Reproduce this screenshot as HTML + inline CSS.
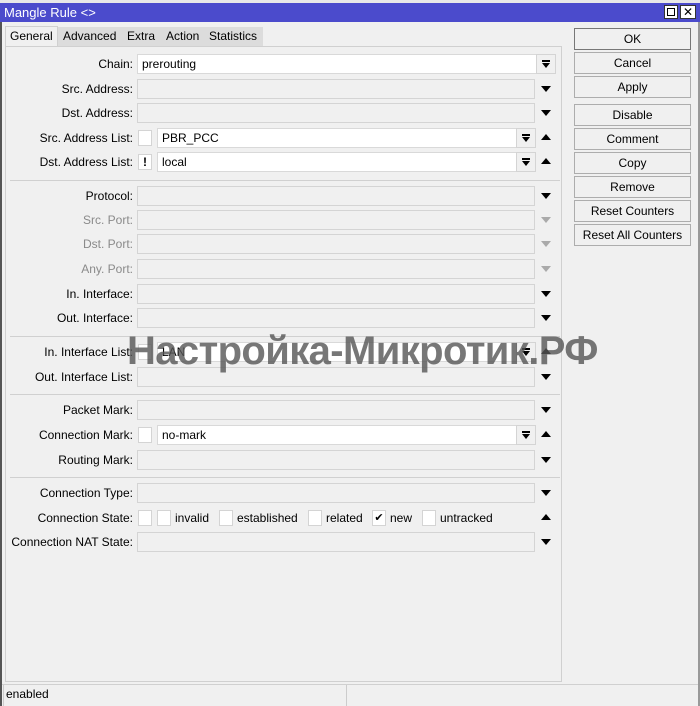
<!DOCTYPE html><html><head><style>
*{margin:0;padding:0;box-sizing:border-box}
body{width:700px;height:706px;background:#f0f0f0;font-family:"Liberation Sans",Arial,sans-serif;font-size:12px;color:#000;position:relative;overflow:hidden}
.a{position:absolute}
.lbl{position:absolute;right:567px;text-align:right;white-space:nowrap;line-height:20px}
.f{position:absolute;height:20px;border:1px solid #d4d4d4;background:#f0f0f0}
.w{background:#fff;border-color:#d9d9d9;padding-left:4px;line-height:18px}
.cb{position:absolute;width:14px;height:16px;border:1px solid #d4d4d4;background:#fff}
.dn{position:absolute;width:0;height:0;border-left:5px solid transparent;border-right:5px solid transparent;border-top:6px solid #000}
.up{position:absolute;width:0;height:0;border-left:5px solid transparent;border-right:5px solid transparent;border-bottom:6px solid #000}
.g{border-top-color:#aaa}
.dis{color:#8a8a8a}
.btn{position:absolute;left:574px;width:117px;height:22px;border:1px solid #adadad;background:#f0f0f0;text-align:center;line-height:20px}
.sep{position:absolute;left:10px;width:550px;height:1px;background:#d0d0d0}
.sb{position:absolute;width:20px;height:20px;border:1px solid #d4d4d4;background:#f0f0f0}
.sb:before{content:"";position:absolute;left:5px;top:5px;width:8px;height:2px;background:#000}
.sb:after{content:"";position:absolute;left:5px;top:8px;border-left:4px solid transparent;border-right:4px solid transparent;border-top:5px solid #000}
</style></head><body>
<div class="a" style="left:0;top:0;width:700px;height:4px;background:#e8e8e8"></div>
<div class="a" style="left:0;top:3px;width:700px;height:19px;background:#4b4bcc;color:#fff;font-size:13px;line-height:19px;padding-left:4px">Mangle Rule &lt;&gt;</div>
<div class="a" style="left:664px;top:5px;width:14px;height:14px;background:#fff;border:1px solid #333"><div class="a" style="left:2px;top:2px;width:8px;height:8px;border:1px solid #000"></div></div>
<div class="a" style="left:680px;top:5px;width:16px;height:14px;background:#fff;border:1px solid #333;text-align:center;line-height:12px;font-size:12px;color:#000">✕</div>
<div class="a" style="left:0;top:22px;width:2px;height:684px;background:#555"></div>
<div class="a" style="left:698px;top:22px;width:2px;height:684px;background:#999"></div>
<div class="a" style="left:5px;top:26px;width:53px;height:21px;background:#f0f0f0;border:1px solid #d0d0d0;border-bottom:none;line-height:19px;padding-left:4px">General</div>
<div class="a" style="left:58px;top:27px;width:205px;height:19px;background:#dcdcdc"></div>
<div class="a" style="left:63px;top:27px;line-height:19px">Advanced</div>
<div class="a" style="left:127px;top:27px;line-height:19px">Extra</div>
<div class="a" style="left:166px;top:27px;line-height:19px">Action</div>
<div class="a" style="left:209px;top:27px;line-height:19px">Statistics</div>
<div class="a" style="left:5px;top:46px;width:557px;height:636px;border:1px solid #d0d0d0"></div>
<div class="btn" style="top:28px;border-color:#777">OK</div>
<div class="btn" style="top:52px">Cancel</div>
<div class="btn" style="top:76px">Apply</div>
<div class="btn" style="top:104px">Disable</div>
<div class="btn" style="top:128px">Comment</div>
<div class="btn" style="top:152px">Copy</div>
<div class="btn" style="top:176px">Remove</div>
<div class="btn" style="top:200px">Reset Counters</div>
<div class="btn" style="top:224px">Reset All Counters</div>
<div class="lbl" style="top:54px">Chain:</div><div class="f w" style="left:137px;top:54px;width:400px">prerouting</div><div class="sb" style="left:536px;top:54px"></div>
<div class="lbl" style="top:79px">Src. Address:</div><div class="f" style="left:137px;top:79px;width:398px"></div><div class="dn" style="left:541px;top:86px"></div>
<div class="lbl" style="top:103px">Dst. Address:</div><div class="f" style="left:137px;top:103px;width:398px"></div><div class="dn" style="left:541px;top:110px"></div>
<div class="lbl" style="top:128px">Src. Address List:</div><div class="cb" style="left:138px;top:130px"></div><div class="f w" style="left:157px;top:128px;width:360px">PBR_PCC</div><div class="sb" style="left:516px;top:128px"></div><div class="up" style="left:541px;top:134px"></div>
<div class="lbl" style="top:152px">Dst. Address List:</div><div class="cb" style="left:138px;top:154px;text-align:center;font-weight:bold;line-height:14px">!</div><div class="f w" style="left:157px;top:152px;width:360px">local</div><div class="sb" style="left:516px;top:152px"></div><div class="up" style="left:541px;top:158px"></div>
<div class="sep" style="top:180px"></div>
<div class="lbl" style="top:186px">Protocol:</div><div class="f" style="left:137px;top:186px;width:398px"></div><div class="dn" style="left:541px;top:193px"></div>
<div class="lbl dis" style="top:210px">Src. Port:</div><div class="f" style="left:137px;top:210px;width:398px"></div><div class="dn g" style="left:541px;top:217px"></div>
<div class="lbl dis" style="top:234px">Dst. Port:</div><div class="f" style="left:137px;top:234px;width:398px"></div><div class="dn g" style="left:541px;top:241px"></div>
<div class="lbl dis" style="top:259px">Any. Port:</div><div class="f" style="left:137px;top:259px;width:398px"></div><div class="dn g" style="left:541px;top:266px"></div>
<div class="lbl" style="top:284px">In. Interface:</div><div class="f" style="left:137px;top:284px;width:398px"></div><div class="dn" style="left:541px;top:291px"></div>
<div class="lbl" style="top:308px">Out. Interface:</div><div class="f" style="left:137px;top:308px;width:398px"></div><div class="dn" style="left:541px;top:315px"></div>
<div class="sep" style="top:336px"></div>
<div class="lbl" style="top:342px">In. Interface List:</div><div class="cb" style="left:138px;top:344px"></div><div class="f w" style="left:157px;top:342px;width:360px">LAN</div><div class="sb" style="left:516px;top:342px"></div><div class="up" style="left:541px;top:348px"></div>
<div class="lbl" style="top:367px">Out. Interface List:</div><div class="f" style="left:137px;top:367px;width:398px"></div><div class="dn" style="left:541px;top:374px"></div>
<div class="sep" style="top:394px"></div>
<div class="lbl" style="top:400px">Packet Mark:</div><div class="f" style="left:137px;top:400px;width:398px"></div><div class="dn" style="left:541px;top:407px"></div>
<div class="lbl" style="top:425px">Connection Mark:</div><div class="cb" style="left:138px;top:427px"></div><div class="f w" style="left:157px;top:425px;width:360px">no-mark</div><div class="sb" style="left:516px;top:425px"></div><div class="up" style="left:541px;top:431px"></div>
<div class="lbl" style="top:450px">Routing Mark:</div><div class="f" style="left:137px;top:450px;width:398px"></div><div class="dn" style="left:541px;top:457px"></div>
<div class="sep" style="top:477px"></div>
<div class="lbl" style="top:483px">Connection Type:</div><div class="f" style="left:137px;top:483px;width:398px"></div><div class="dn" style="left:541px;top:490px"></div>
<div class="lbl" style="top:508px">Connection State:</div>
<div class="cb" style="left:138px;top:510px"></div>
<div class="cb" style="left:157px;top:510px"></div><div class="a" style="left:175px;top:508px;line-height:20px">invalid</div>
<div class="cb" style="left:219px;top:510px"></div><div class="a" style="left:237px;top:508px;line-height:20px">established</div>
<div class="cb" style="left:308px;top:510px"></div><div class="a" style="left:326px;top:508px;line-height:20px">related</div>
<div class="cb" style="left:372px;top:510px;font-size:11px;line-height:14px;text-align:center">✔</div><div class="a" style="left:390px;top:508px;line-height:20px">new</div>
<div class="cb" style="left:422px;top:510px"></div><div class="a" style="left:440px;top:508px;line-height:20px">untracked</div>
<div class="up" style="left:541px;top:514px"></div>
<div class="lbl" style="top:532px">Connection NAT State:</div><div class="f" style="left:137px;top:532px;width:398px"></div><div class="dn" style="left:541px;top:539px"></div>
<div class="a" style="left:127px;top:327px;font-size:40px;font-weight:bold;color:rgba(85,85,85,0.8);line-height:48px;white-space:nowrap;letter-spacing:-0.6px">Настройка-Микротик.РФ</div>
<div class="a" style="left:2px;top:684px;width:696px;height:1px;background:#d0d0d0"></div>
<div class="a" style="left:3px;top:685px;width:344px;height:21px;border-left:1px solid #ccc;border-right:1px solid #ccc;padding-left:2px;line-height:19px">enabled</div>
</body></html>
